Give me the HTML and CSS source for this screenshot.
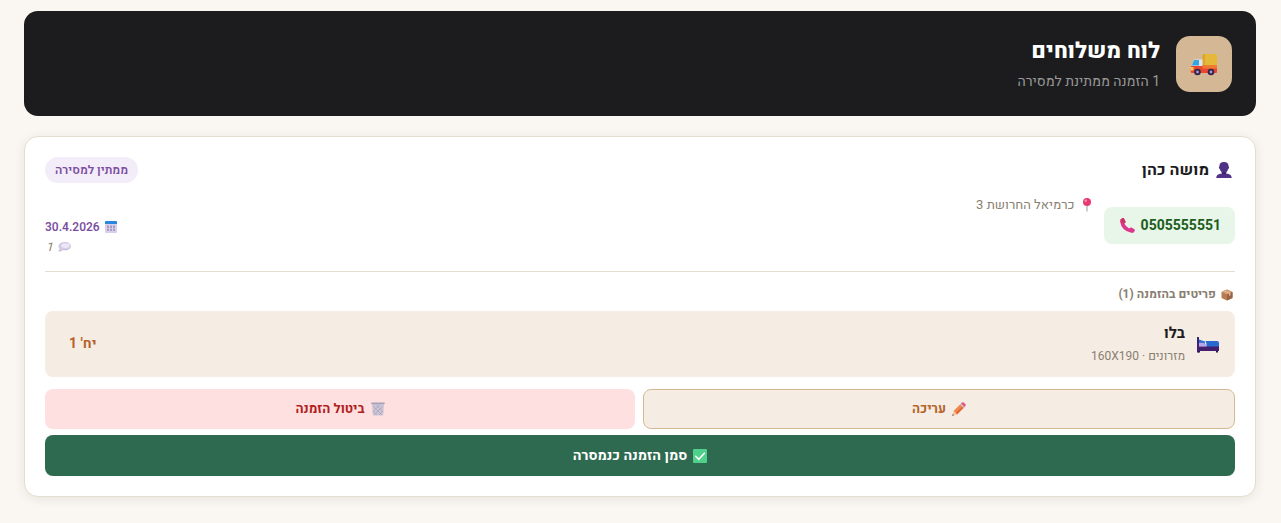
FILE: index.html
```html
<!DOCTYPE html>
<html lang="he" dir="rtl">
<head>
<meta charset="utf-8">
<title>לוח משלוחים</title>
<link rel="stylesheet" href="styles.css">
</head>
<body>
<main class="page">
  <header class="board-header">
    <div class="board-icon">
      <svg class="truck" viewBox="0 0 28 24" aria-hidden="true">
        <rect x="12.500" y="2" width="14.500" height="14" rx="1" fill="#e6b83a"/>
        <path d="M12.500 2.500H15V15h-2.500z" fill="#d9a52c"/>
        <path d="M4 7.500h8.500v7H1.500z" fill="#e3e3f0"/>
        <path d="M4 8h5v5.500H1.800z" fill="#35a5de"/>
        <path d="M1 14h11.500v-.5H27V20q0 1-1 1H2q-1.300 0-1.300-1.500z" fill="#e8472f"/>
        <path d="M12.500 13.500H27v3H12.500z" fill="#ef7a34"/>
        <rect x=".6" y="15" width="3" height="3.500" rx="1" fill="#ffc94d"/>
        <circle cx="7.500" cy="20" r="3.300" fill="#33224f"/><circle cx="7.500" cy="20" r="1.400" fill="#a79cc0"/>
        <circle cx="21" cy="20" r="3.300" fill="#33224f"/><circle cx="21" cy="20" r="1.400" fill="#a79cc0"/>
      </svg>
    </div>
    <div class="board-text">
      <h1 class="board-title">לוח משלוחים</h1>
      <p class="board-subtitle">1 הזמנה ממתינת למסירה</p>
    </div>
  </header>

  <article class="order">
    <div class="order-head">
      <h2 class="customer">
        <svg class="icon-person" viewBox="0 0 16 16" aria-hidden="true">
          <path d="M8 0c3.300 0 4.800 2 4.600 4.600.9.300.5 2.200-.4 2.400C11.600 9 10.800 9.800 10 10.400V11.500c2.800.3 5.500 1 5.700 4.500H.3C.5 12.500 3.200 11.800 6 11.500V10.400C5.200 9.800 4.400 9 3.800 7c-.9-.2-1.300-2.100-.4-2.400C3.200 2 4.700 0 8 0z" fill="#4f3185"/>
          <path d="M5.500 10q2.500 1.500 5 0l-.5 1.500q-2 1.400-4 0z" fill="#371f64"/>
        </svg>
        <span>מושה כהן</span>
      </h2>
      <span class="status">ממתין למסירה</span>
    </div>

    <div class="order-meta">
      <div class="contact">
        <a class="phone" href="tel:0505555551">
          <span>0505555551</span>
          <svg class="icon-phone" viewBox="0 0 14 14" aria-hidden="true">
            <path d="M.5 1.500 2.500 0q.8-.3 1.200.5l1.400 2.800q.3.700-.3 1.200L4 5.200q1.500 3 4.500 4.700l1-.8q.5-.5 1.200-.2l2.700 1.600q.7.500.4 1.200l-.8 1.500Q12 14 10.500 13.800 1.500 12 .1 3.500-.1 2.300.5 1.500z" fill="#dd368c"/>
            <path d="M.5 1.500 2.500 0q.8-.3 1.200.5l1.400 2.800q.3.700-.3 1.200L3 5.500z" fill="#c9355f"/>
          </svg>
        </a>
        <p class="address">
          <svg class="icon-pin" viewBox="0 0 10 14" aria-hidden="true">
            <path d="M4.500 7h1v6.500h-1z" fill="#9b95a8"/>
            <circle cx="5" cy="4" r="4" fill="#e83a72"/><circle cx="3.700" cy="2.800" r="1.200" fill="#f98fae"/>
          </svg>
          <span>כרמיאל החרושת 3</span>
        </p>
      </div>
      <div class="schedule">
        <p class="date">
          <svg class="icon-calendar" viewBox="0 0 12 12" aria-hidden="true">
            <rect width="12" height="12" rx="1" fill="#d9cfeb"/><path d="M0 3V1q0-1 1-1h10q1 0 1 1v2z" fill="#2b87dc"/>
            <path d="M2 4.500h2v5.500H2zm3 0h2v5.500H5zm3 0h2v5.500H8z" fill="#a79cc2"/>
            <path d="M2 7h8v.7H2z" fill="#d9cfeb"/>
          </svg>
          <span>30.4.2026</span>
        </p>
        <p class="note">
          <svg class="icon-bubble" viewBox="0 0 13 10" aria-hidden="true">
            <path d="M7 .5c3.500 0 5.500 1.500 5.500 3.700S10.300 8 7 8c-1 0-1.700-.1-2.400-.3Q3 9.200.8 9.200 2 8 1.800 6.500 1 5.500 1 4.200C1 2 3.500.5 7 .5z" fill="#d6cce8" stroke="#b9adcf" stroke-width=".6"/>
            <ellipse cx="7.500" cy="3.600" rx="4.300" ry="2.400" fill="#ece6f6"/>
          </svg>
          <span>1</span>
        </p>
      </div>
    </div>

    <section class="items">
      <h3 class="items-title">
        <svg class="icon-box" viewBox="0 0 12 12" aria-hidden="true">
          <path d="M6 .5 11.500 3v6L6 11.500.5 9V3z" fill="#b87a50"/><path d="M6 .5 11.500 3 6 5.500.5 3z" fill="#d3a07a"/><path d="M6 5.500 11.500 3v6L6 11.500z" fill="#9a6444"/><path d="M2.500 2 8 4.600V7l1.500-.7V3.900L4 1.300z" fill="#dcb898"/>
        </svg>
        <span>פריטים בהזמנה (1)</span>
      </h3>
      <div class="item">
        <svg class="icon-bed" viewBox="0 0 22 18" aria-hidden="true">
          <path d="M0 2h2v15.500H0z" fill="#3b2476"/><path d="M2 4.500 8 6.500v4H2z" fill="#2d6fd0"/>
          <path d="M2 8q4-1 7 1v2.500H2z" fill="#b6a5ec"/><path d="M8.500 6H20q2 0 2 2v4H9.500V9z" fill="#2a6ad0"/>
          <path d="M0 11.500h22v4.500H0z" fill="#43206d"/><path d="M1 16h2v1.500H1zm18 0h2v1.500h-2z" fill="#2e1650"/>
        </svg>
        <div class="item-text">
          <p class="item-name">בלו</p>
          <p class="item-detail">מזרונים · 160X190</p>
        </div>
        <span class="item-qty">יח' 1</span>
      </div>
    </section>

    <div class="actions">
      <button type="button" class="button button-edit">
        <svg class="icon-action" viewBox="0 0 14 14" aria-hidden="true">
          <path d="M1.500 9 9 1.500 12.500 5 5 12.500z" fill="#f08a4c"/><path d="M3.500 11 11 3.500 12.500 5 5 12.500z" fill="#e6683a"/>
          <path d="M9 1.500 10 .6q1-.8 2 .1l1.300 1.300q.9 1 .1 2L12.500 5z" fill="#e2557a"/><path d="M8 2.500 9 1.500 12.500 5l-1 1z" fill="#c9bfd3"/>
          <path d="M1.500 9 5 12.500.3 13.700z" fill="#f5c9a3"/><path d="M.8 12 2 13.200l-1.700.5z" fill="#4b3358"/>
        </svg>
        <span>עריכה</span>
      </button>
      <button type="button" class="button button-cancel">
        <svg class="icon-action" viewBox="0 0 14 14" aria-hidden="true">
          <path d="M1 1.500h12L12.200 13.500H1.800z" fill="#cbc5d6"/>
          <path d="m2 4 9 9M5 2.500l7 7M2 9l4 4M12 4l-9 9M9 2.500l-7 7M12 9l-4 4" stroke="#a39cb5" stroke-width=".6"/>
          <path d="M.3.500h13.400v1.700H.3z" fill="#a7a1b8"/>
        </svg>
        <span>ביטול הזמנה</span>
      </button>
      <button type="button" class="button button-done">
        <svg class="icon-action" viewBox="0 0 14 14" aria-hidden="true">
          <rect width="14" height="14" rx="1" fill="#4fd18b"/><path d="m2.700 7.300 3 3 5.700-6" fill="none" stroke="#fff" stroke-width="1.600" stroke-linecap="round"/>
        </svg>
        <span>סמן הזמנה כנמסרה</span>
      </button>
    </div>
  </article>
</main>
</body>
</html>
```
FILE: styles.css
```css
* {
  box-sizing: border-box;
}

body {
  margin: 0;
  background: #faf6f1;
  color: #1c1c1e;
  font-family: Heebo, Roboto, "Open Sans", sans-serif;
  font-size: 14px;
}

h1, h2, h3, p {
  margin: 0;
}

svg {
  display: block;
  flex: none;
}

.page {
  display: flex;
  flex-direction: column;
  gap: 20px;
  padding: 11px 25px 26px 24px;
}

.board-header {
  display: flex;
  align-items: center;
  gap: 16px;
  padding: 24px;
  border-radius: 14px;
  background: #1c1c1e;
}

.board-icon {
  display: grid;
  place-items: center;
  width: 56px;
  height: 56px;
  border-radius: 14px;
  background: #d4b896;
}

.truck {
  width: 28px;
  height: 24px;
}

.board-title {
  color: #fff;
  font-size: 22px;
  font-weight: 800;
  line-height: 33px;
}

.board-subtitle {
  margin-top: 3px;
  color: #999;
  font-size: 14px;
  line-height: 21px;
}

.order {
  padding: 20px;
  border: 1px solid #e5ddd0;
  border-radius: 14px;
  background: #fff;
  box-shadow: 0 2px 12px rgba(0, 0, 0, 0.08);
}

.order-head {
  display: flex;
  align-items: center;
  justify-content: space-between;
}

.customer {
  display: flex;
  align-items: center;
  gap: 7px;
  padding-inline-start: 3px;
  font-size: 16px;
  font-weight: 700;
  line-height: 26px;
}

.icon-person {
  width: 16px;
  height: 16px;
}

.status {
  padding: 3px 10px;
  border-radius: 13px;
  background: #f3ecf9;
  color: #7b4fa0;
  font-size: 12px;
  font-weight: 600;
  line-height: 20px;
}

.order-meta {
  display: flex;
  align-items: flex-end;
  justify-content: space-between;
  padding: 12px 0 14px;
  border-bottom: 1px solid #e5ddd0;
}

.contact {
  display: flex;
  gap: 12px;
  min-height: 62px;
}

.phone {
  display: flex;
  align-items: center;
  align-self: flex-start;
  gap: 6px;
  margin-top: 12px;
  padding: 8px 14px 8px 16px;
  border-radius: 8px;
  background: #e8f5e9;
  color: #1b5e20;
  font-size: 14px;
  font-weight: 700;
  line-height: 21px;
  text-decoration: none;
}

.icon-phone {
  width: 15px;
  height: 15px;
}

.address {
  display: flex;
  align-items: center;
  align-self: flex-start;
  gap: 7px;
  color: #8a7f72;
  font-size: 13px;
  line-height: 20px;
}

.icon-pin {
  width: 10px;
  height: 14px;
}

.schedule {
  display: flex;
  flex-direction: column;
  align-items: flex-end;
}

.date,
.note {
  display: flex;
  align-items: center;
  gap: 5px;
  font-size: 12px;
  line-height: 20px;
}

.date {
  color: #7b4fa0;
  font-weight: 600;
}

.note {
  padding-inline-end: 1px;
  color: #8a7f72;
  font-style: italic;
}

.icon-calendar {
  width: 12px;
  height: 12px;
}

.icon-bubble {
  width: 13px;
  height: 10px;
}

.items {
  display: flex;
  flex-direction: column;
  gap: 8px;
  padding-top: 14px;
}

.items-title {
  display: flex;
  align-items: center;
  gap: 5px;
  padding-inline-start: 2px;
  color: #8a7f72;
  font-size: 12px;
  font-weight: 700;
  line-height: 17px;
}

.icon-box {
  width: 12px;
  height: 12px;
}

.item {
  display: flex;
  align-items: center;
  gap: 12px;
  padding: 10px 16px 11px;
  border-radius: 8px;
  background: #f5ece3;
}

.icon-bed {
  width: 22px;
  height: 18px;
}

.item-text {
  flex: 1;
}

.item-name {
  font-size: 15px;
  font-weight: 700;
  line-height: 25px;
}

.item-detail {
  color: #8a7f72;
  font-size: 12px;
  line-height: 20px;
}

.item-qty {
  padding-inline-end: 8px;
  color: #b5652b;
  font-size: 14px;
  font-weight: 700;
}

.actions {
  display: flex;
  flex-wrap: wrap;
  gap: 6px 8px;
  margin-top: 12px;
}

.button {
  display: flex;
  flex: 1;
  align-items: center;
  justify-content: center;
  gap: 6px;
  padding: 10px;
  border: 0;
  border-radius: 8px;
  font-family: inherit;
  font-size: 13px;
  font-weight: 700;
  line-height: 20px;
  cursor: pointer;
}

.button-edit {
  padding-block: 9px;
  border: 1px solid #d4b896;
  background: #f5ece3;
  color: #b5652b;
}

.button-cancel {
  background: #ffe0e0;
  color: #b02020;
}

.button-done {
  flex-basis: 100%;
  background: #2d6a4f;
  color: #fff;
  font-size: 14px;
  line-height: 21px;
}

.icon-action {
  width: 14px;
  height: 14px;
}
```
